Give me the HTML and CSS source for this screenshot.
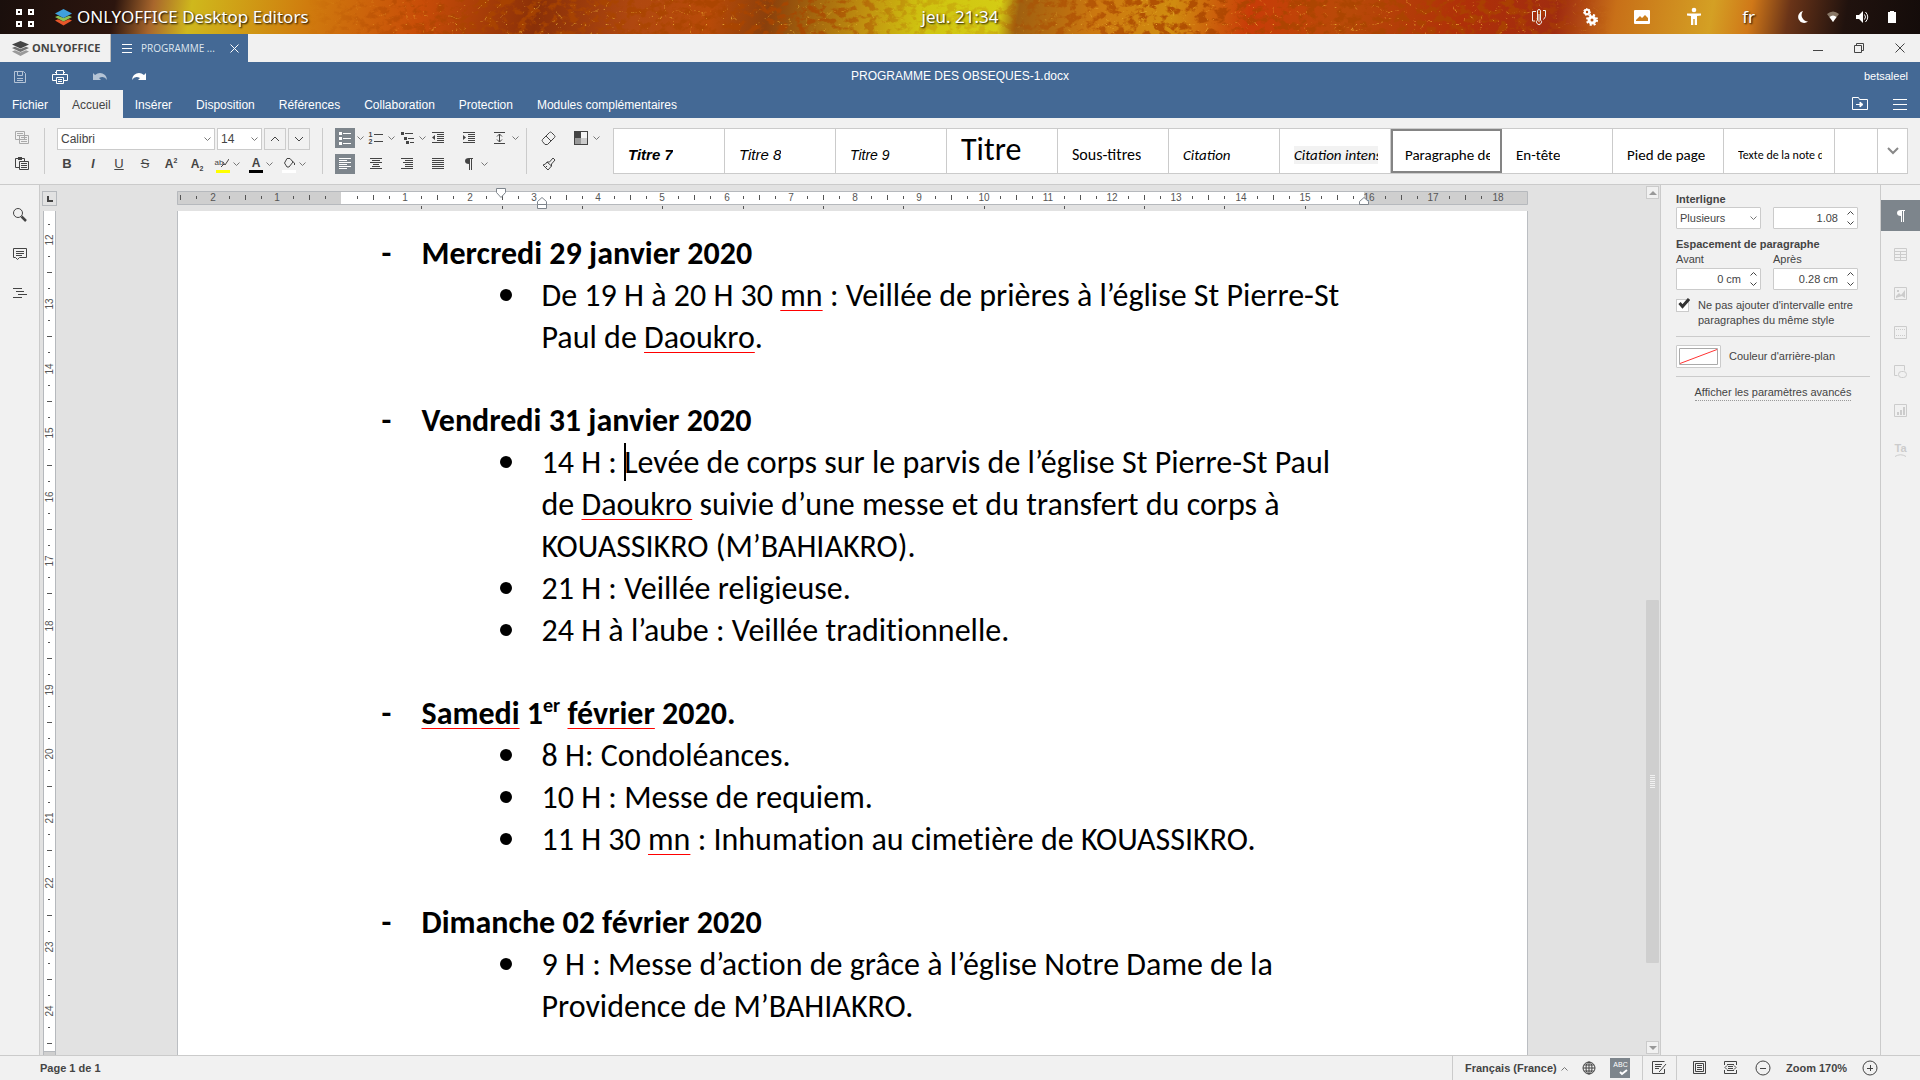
FILE: index.html
```html
<!DOCTYPE html>
<html lang="fr">
<head>
<meta charset="utf-8">
<title>PROGRAMME DES OBSEQUES-1.docx</title>
<link rel="stylesheet" href="styles.css">
</head>
<body>
<svg class="defs" aria-hidden="true">
  <symbol id="chev" viewBox="0 0 7 5"><path d="M.5 .5l3 3 3-3" fill="none" stroke="#777"/></symbol>
  <symbol id="chev-up" viewBox="0 0 7 5"><path d="M.5 4.500l3-3 3 3" fill="none" stroke="#777"/></symbol>
  <symbol id="stack" viewBox="0 0 17 17">
    <path opacity=".5" d="M0 11.500l3-1.300 5.500 2.400 5.500-2.400 3 1.300-8.500 4.500z"/>
    <path opacity=".75" d="M0 8l3-1.300 5.500 2.400L14 6.700 17 8l-8.500 4z"/>
    <path d="M0 4.500L8.500 1 17 4.500 8.500 8.500z"/>
  </symbol>
</svg>

<header class="sysbar">
  <svg class="sky" aria-hidden="true">
    <filter id="lava" x="0" y="0" width="100%" height="100%">
      <feTurbulence type="fractalNoise" baseFrequency=".1 .13" numOctaves="4" seed="8"/>
      <feColorMatrix values="0 0 0 0 .4  0 0 0 0 .06  0 0 0 0 0  6 0 0 0 -2.900"/>
    </filter>
    <filter id="glow" x="0" y="0" width="100%" height="100%">
      <feTurbulence type="turbulence" baseFrequency=".06 .08" numOctaves="4" seed="3"/>
      <feColorMatrix values="0 0 0 0 .95  0 0 0 0 .6  0 0 0 0 .05  -7 0 0 0 .8"/>
    </filter>
    <rect width="100%" height="100%" filter="url(#lava)"/>
    <rect width="100%" height="100%" filter="url(#glow)"/>
  </svg>
  <div class="sys-left">
    <button class="plain" aria-label="Activités"><svg width="20" height="20" fill="none" stroke="#fff" stroke-width="2"><path d="M2 3h4v4H2zM14 3h4v4h-4zM2 15h4v4H2zM14 15h4v4h-4z"/></svg></button>
    <svg class="logo-color" width="17" height="17" viewBox="0 0 17 17"><path fill="#e8562a" d="M0 11.500l3-1.300 5.500 2.400 5.500-2.400 3 1.300-8.500 5z"/><path fill="#8cc152" d="M0 8l3-1.300 5.500 2.400L14 6.700 17 8l-8.500 4.500z"/><path fill="#3fa0dc" d="M0 4.500L8.500 0 17 4.500 8.500 9z"/></svg>
    <span>ONLYOFFICE Desktop Editors</span>
  </div>
  <span class="clock">jeu. 21:34</span>
  <div class="sys-right">
    <svg width="16" height="18" fill="none" stroke="#eee"><path d="M5 3.500H1.500v9.500H4M12 2.500h2.500v6l-2 3M6.500 12V3a1.500 1.500 0 0 1 3 0v9a2.500 2.500 0 1 1-3 0zM8 6v8"/></svg>
    <svg width="16" height="18" fill="none" stroke="#fff"><circle cx="5" cy="4" r="2.200" stroke-width="2"/><circle cx="5" cy="4" r="3.500" stroke-dasharray="1.500 1.500"/><circle cx="10" cy="12" r="3" stroke-width="3"/><circle cx="10" cy="12" r="5" stroke-width="2" stroke-dasharray="2 2"/></svg>
    <svg width="18" height="18"><path fill="#fff" fill-rule="evenodd" d="M2 2h14q1 0 1 1v12q0 1-1 1H2q-1 0-1-1V3q0-1 1-1zm1 11h12v-3l-3-3-3 3-2-2-4 4z"/></svg>
    <svg width="16" height="20" fill="#fff"><circle cx="8" cy="3" r="2.300"/><path d="M1 6.500h14v2l-4 .5v9H8.700v-6H7.300v6H5V9L1 8.500z"/></svg>
    <span class="lang">fr</span>
    <svg width="14" height="14"><path fill="#fff" d="M6 1a6 6 0 1 0 5 10.500A6.500 6.500 0 0 1 6 1z"/></svg>
    <svg width="14" height="14"><path fill="#887766" d="M1 4q6-5 12 0l-6 8z"/><path fill="#fff" d="M3.500 7q3.500-3 7 0L7 12z"/></svg>
    <svg width="14" height="14"><path fill="#fff" d="M1 5h3l4-4v12L4 9H1z"/><path fill="none" stroke="#fff" d="M9.500 4.500q2 2.500 0 5M10.500 2q4.500 5 0 10"/></svg>
    <svg class="battery" width="10" height="14"><path fill="#fff" d="M3 1h4v1h2v11H1V2h2z"/></svg>
  </div>
</header>

<nav class="filetabs">
  <button class="ftab home"><svg width="17" height="17"><use href="#stack"/></svg>ONLYOFFICE</button>
  <button class="ftab doc">
    <svg width="10" height="10" stroke="#fff"><path d="M0 1.500h10M0 5.500h10M0 9.500h10"/></svg>
    <span>PROGRAMME ...</span>
    <svg width="9" height="9" stroke="#fff" fill="none"><path d="M.5 .5l8 8M8.500 .5l-8 8"/></svg>
  </button>
  <div class="winctl">
    <button class="plain" aria-label="Réduire"><svg width="12" height="12" stroke="#444"><path d="M1 8.500h10"/></svg></button>
    <button class="plain" aria-label="Restaurer"><svg width="12" height="12" stroke="#444" fill="none"><path d="M1.500 3.500h7v7h-7zM3.500 3.500v-2h7v7h-2"/></svg></button>
    <button class="plain" aria-label="Fermer"><svg width="12" height="12" stroke="#444" fill="none"><path d="M1.500 1.500l9 9M10.500 1.500l-9 9"/></svg></button>
  </div>
</nav>

<div class="titlebar">
  <div class="quick">
    <button class="plain" aria-label="Enregistrer"><svg width="14" height="14" fill="none" stroke="#b5c4d6"><path d="M1.500 1.500h9l2 2v9h-11zM4.500 1.500v4h5v-4M4 8.500h6M4 10.500h6"/></svg></button>
    <button class="plain" aria-label="Imprimer"><svg width="16" height="14" fill="none" stroke="#fff"><path d="M4.500 4V.5h7V4M4.500 10.500h-4v-6h15v6h-4M4.500 7.500h7v6h-7zM6 9.500h4M6 11.500h4M3 2.500h2M12 2.500h1"/></svg></button>
    <button class="plain" aria-label="Annuler"><svg width="14" height="10"><path fill="#b5c4d6" d="M0 1l2 2q5-4 10 0 2 2 2 5-3-5-8-2l2 2H0z"/></svg></button>
    <button class="plain" aria-label="Rétablir"><svg width="14" height="10"><path fill="#fff" d="M14 1l-2 2Q7-1 2 3 0 5 0 8q3-5 8-2L6 8h8z"/></svg></button>
  </div>
  <span class="doc-title">PROGRAMME DES OBSEQUES-1.docx</span>
  <span class="user">betsaleel</span>
</div>

<nav class="menu">
  <button>Fichier</button><button class="active">Accueil</button><button>Insérer</button><button>Disposition</button><button>Références</button><button>Collaboration</button><button>Protection</button><button>Modules complémentaires</button>
  <div class="menu-right">
    <button class="plain" aria-label="Ouvrir l'emplacement"><svg width="17" height="14" fill="none" stroke="#fff"><path d="M.5 12.500V.5h6l1 2h8v10z"/><path d="M4 7.500h6M8 5l3 2.500L8 10z" fill="#fff"/></svg></button>
    <button class="plain" aria-label="Affichage"><svg width="14" height="11" stroke="#fff"><path d="M0 .5h14M0 5.500h14M0 10.500h14"/></svg></button>
  </div>
</nav>

<div class="toolbar">
  <div class="tools clip">
    <div class="row"><button class="ib" aria-label="Copier"><svg width="14" height="14" fill="#f1f1f1" stroke="#aaa"><path d="M.5 .5h9v8h-9zM2 2.500h6M2 4.500h3M4.500 4.500h9v8h-9zM6 6.500h6M6 8.500h6M6 10.500h6"/></svg></button></div>
    <div class="row"><button class="ib" aria-label="Coller"><svg width="14" height="14" fill="#f1f1f1" stroke="#444"><path d="M.5 1.500h9v9h-9z"/><path d="M3 1.500h4" stroke-width="3"/><path d="M4.500 4.500h9v8h-9zM6 6.500h6M6 8.500h6M6 10.500h6"/></svg></button></div>
  </div>
  <div class="tools font">
    <div class="row fontrow">
      <span class="combo"><input class="w-font" aria-label="Police" value="Calibri"><svg width="7" height="5"><use href="#chev"/></svg></span>
      <span class="combo"><input class="w-size" aria-label="Taille" value="14"><svg width="7" height="5"><use href="#chev"/></svg></span>
      <button class="boxed" aria-label="Augmenter la taille"><svg width="10" height="6" fill="none" stroke="#444"><path d="M1 5l4-4 4 4"/></svg></button>
      <button class="boxed" aria-label="Réduire la taille"><svg width="10" height="6" fill="none" stroke="#444"><path d="M1 1l4 4 4-4"/></svg></button>
    </div>
    <div class="row spaced">
      <button class="ib"><b>B</b></button>
      <button class="ib"><i>I</i></button>
      <button class="ib"><u>U</u></button>
      <button class="ib"><s>S</s></button>
      <button class="ib letter">A<sup>2</sup></button>
      <button class="ib letter">A<sub>2</sub></button>
      <span class="split"><button class="ib ink yellow"><small>ab</small><svg width="8" height="11" fill="none" stroke="#444"><path d="M0 10l3-3M2 5l2 3 4-6"/></svg></button><svg width="7" height="5"><use href="#chev"/></svg></span>
      <span class="split"><button class="ib ink black">A</button><svg width="7" height="5"><use href="#chev"/></svg></span>
      <span class="split"><button class="ib ink white" aria-label="Ombrage"><svg width="13" height="11" fill="none" stroke="#444"><path d="M4 1.500h3l3 3.500-4 5H4L1.500 6zM9 4l2.500 2v2"/></svg></button><svg width="7" height="5"><use href="#chev"/></svg></span>
    </div>
  </div>
  <div class="tools para">
    <div class="row">
      <span class="split"><button class="ib on" aria-label="Puces"><svg width="14" height="14" stroke="#fff"><path d="M5 2.500h8M5 7.500h8M5 12.500h8"/><path d="M1 2.500h3M1 7.500h3M1 12.500h3" stroke-width="3"/></svg></button><svg width="7" height="5"><use href="#chev"/></svg></span>
      <span class="split"><button class="ib nums" aria-label="Numérotation"><span>1<br>2</span><svg width="9" height="12" stroke="#444"><path d="M0 2.500h9M0 9.500h9"/></svg></button><svg width="7" height="5"><use href="#chev"/></svg></span>
      <span class="split"><button class="ib" aria-label="Liste multiniveau"><svg width="14" height="14" stroke="#444"><path d="M5 2.500h8M8 7.500h6M10 11.500h4"/><path d="M1 2.500h3M4 7.500h3M6 11.500h3" stroke-width="3"/></svg></button><svg width="7" height="5"><use href="#chev"/></svg></span>
      <span class="split"><button class="ib" aria-label="Réduire le retrait"><svg width="14" height="14" stroke="#444"><path d="M1 1.500h12M6 3.500h7M6 5.500h7M6 7.500h7M6 9.500h7M1 11.500h12"/><path d="M1 6.500L4 4v5z" fill="#444" stroke="none"/></svg></button></span>
      <span class="split"><button class="ib" aria-label="Augmenter le retrait"><svg width="14" height="14" stroke="#444"><path d="M1 1.500h12M6 3.500h7M6 5.500h7M6 7.500h7M6 9.500h7M1 11.500h12"/><path d="M4 6.500L1 4v5z" fill="#444" stroke="none"/></svg></button></span>
      <span class="split"><button class="ib" aria-label="Interligne"><svg width="14" height="14" stroke="#444" fill="none"><path d="M1 1.500h11M1 12.500h11M6.500 3v8M4 5.500L6.500 3 9 5.500M4 8.500L6.500 11 9 8.500"/></svg></button><svg width="7" height="5"><use href="#chev"/></svg></span>
    </div>
    <div class="row">
      <span class="split"><button class="ib on" aria-label="Aligner à gauche"><svg width="14" height="14" stroke="#fff"><path d="M1 1.500h12M1 3.500h8M1 5.500h12M1 7.500h8M1 9.500h12M1 11.500h8"/></svg></button></span>
      <span class="split"><button class="ib" aria-label="Centrer"><svg width="14" height="14" stroke="#444"><path d="M1 1.500h12M3 3.500h8M1 5.500h12M4 7.500h6M3 9.500h8M1 11.500h12"/></svg></button></span>
      <span class="split"><button class="ib" aria-label="Aligner à droite"><svg width="14" height="14" stroke="#444"><path d="M1 1.500h12M5 3.500h8M3 5.500h10M5 7.500h8M5 9.500h8M1 11.500h12"/></svg></button></span>
      <span class="split"><button class="ib" aria-label="Justifier"><svg width="14" height="14" stroke="#444"><path d="M1 1.500h12M1 3.500h12M1 5.500h12M1 7.500h12M1 9.500h12M1 11.500h12"/></svg></button></span>
      <span class="split"><button class="ib" aria-label="Caractères non imprimables"><svg width="10" height="12"><path fill="#444" d="M9 0v1H8v11H7V1H6v11H5V6Q1 6 1 3t4-3z"/></svg></button><svg width="7" height="5"><use href="#chev"/></svg></span>
    </div>
  </div>
  <div class="tools misc">
    <div class="row">
      <span class="split"><button class="ib" aria-label="Effacer le style"><svg width="16" height="14" fill="none" stroke="#444"><path d="M1.500 8.500l7-7q1-1 2 0l3 3q1 1 0 2l-7 7H4L1.500 10.500q-.8-1 0-2zM5 5l5 5"/></svg></button></span>
      <span class="split"><button class="ib" aria-label="Jeu de couleurs"><svg width="14" height="14"><path fill="#444" d="M0 0h14v14H0z"/><path fill="#f4f4f4" d="M7 1h6v6H7z"/><path fill="#999" d="M1 7h6v6H1z"/><path fill="#ccc" d="M7 7h6v6H7z"/></svg></button><svg width="7" height="5"><use href="#chev"/></svg></span>
    </div>
    <div class="row"><span class="split"><button class="ib" aria-label="Copier le style"><svg width="14" height="14" fill="none" stroke="#444"><path d="M7.500 5L11 1l2 2-3.500 4v2L6 13 1 8q3-.5 4-3zM5 5l4.500 4M4 9l1 1"/></svg></button></span></div>
  </div>
  <div class="gallery">
    <button class="st t7"><span>Titre 7</span></button>
    <button class="st t8"><span>Titre 8</span></button>
    <button class="st t9"><span>Titre 9</span></button>
    <button class="st big"><span>Titre</span></button>
    <button class="st sub"><span>Sous-titres</span></button>
    <button class="st it"><span>Citation</span></button>
    <button class="st it shade"><span>Citation intense</span></button>
    <button class="st sel"><span>Paragraphe de liste</span></button>
    <button class="st"><span>En-tête</span></button>
    <button class="st"><span>Pied de page</span></button>
    <button class="st note"><span>Texte de la note de bas</span></button>
    <span class="rest"></span>
    <button class="more" aria-label="Plus de styles"><svg width="12" height="8" fill="none" stroke="#888" stroke-width="2"><path d="M1 1l5 5 5-5"/></svg></button>
  </div>
</div>

<main class="body">
  <aside class="left">
    <button class="plain" aria-label="Rechercher"><svg width="16" height="16" fill="none" stroke="#444"><circle cx="6" cy="6" r="4.500"/><path d="M9.500 9.500l4.500 4.500" stroke-width="2.500"/></svg></button>
    <button class="plain" aria-label="Commentaires"><svg width="16" height="16" fill="none" stroke="#444"><path d="M1.500 2.500h13v9h-7l-2 2-2-2h-2zM4 5.500h8M4 7.500h8M4 9.500h6"/></svg></button>
    <button class="plain" aria-label="Navigation"><svg width="16" height="16" stroke="#444"><path d="M1 3.500h9M4 6.500h8M6 9.500h9M1 12.500h9"/></svg></button>
  </aside>
  <section class="editor">
    <button class="tabkind" aria-label="Taquet"><svg width="6" height="6"><path d="M1 0v5h5" fill="none" stroke="#444" stroke-width="2"/></svg></button>
    <svg class="hruler" id="hruler"></svg>
    <svg class="vruler" id="vruler"></svg>
    <article class="page">
      <h2>Mercredi 29 janvier 2020</h2>
      <ul>
        <li>De 19 H à 20 H 30 <em>mn</em>&nbsp;: Veillée de prières à l’église St Pierre-St<br>Paul de <em>Daoukro</em>.</li>
      </ul>
      <h2>Vendredi 31 janvier 2020</h2>
      <ul>
        <li>14 H&nbsp;: <span class="cursor"></span>Levée de corps sur le parvis de l’église St Pierre-St Paul<br>de <em>Daoukro</em> suivie d’une messe et du transfert du corps à<br>KOUASSIKRO (M’BAHIAKRO).</li>
        <li>21 H&nbsp;: Veillée religieuse.</li>
        <li>24 H à l’aube&nbsp;: Veillée traditionnelle.</li>
      </ul>
      <h2><em>Samedi</em> 1<sup>er</sup> <em>février</em> 2020.</h2>
      <ul>
        <li>8 H: Condoléances.</li>
        <li>10 H&nbsp;: Messe de requiem.</li>
        <li>11 H 30 <em>mn</em>&nbsp;: Inhumation au cimetière de KOUASSIKRO.</li>
      </ul>
      <h2>Dimanche 02 février 2020</h2>
      <ul>
        <li>9 H&nbsp;: Messe d’action de grâce à l’église Notre Dame de la<br>Providence de M’BAHIAKRO.</li>
      </ul>
    </article>
    <div class="scroll">
      <button class="arrow" aria-label="Haut"><svg width="8" height="4"><path fill="#999" d="M4 0l4 4H0z"/></svg></button>
      <div class="track"><div class="thumb"><i></i></div></div>
      <button class="arrow" aria-label="Bas"><svg width="8" height="4"><path fill="#999" d="M4 4l4-4H0z"/></svg></button>
    </div>
  </section>
  <aside class="props">
    <label class="title" for="ls">Interligne</label>
    <div class="pair">
      <span class="field"><select id="ls"><option>Plusieurs</option></select><svg width="7" height="5"><use href="#chev"/></svg></span>
      <span class="field spin"><input aria-label="Valeur d'interligne" value="1.08"><svg width="7" height="14" fill="none" stroke="#444"><path d="M.5 3.500l3-3 3 3M.5 10.500l3 3 3-3"/></svg></span>
    </div>
    <h3 class="title second">Espacement de paragraphe</h3>
    <div class="pair">
      <label for="bef">Avant</label><label for="aft">Après</label>
      <span class="field spin"><input id="bef" value="0 cm"><svg width="7" height="14" fill="none" stroke="#444"><path d="M.5 3.500l3-3 3 3M.5 10.500l3 3 3-3"/></svg></span>
      <span class="field spin"><input id="aft" value="0.28 cm"><svg width="7" height="14" fill="none" stroke="#444"><path d="M.5 3.500l3-3 3 3M.5 10.500l3 3 3-3"/></svg></span>
    </div>
    <label class="check"><input type="checkbox" checked><svg width="13" height="13" fill="none" stroke="#333" stroke-width="3"><path d="M2.500 5l3 3.500L12 1"/></svg><span>Ne pas ajouter d'intervalle entre paragraphes du même style</span></label>
    <div class="color"><button aria-label="Couleur d'arrière-plan"><svg width="39" height="17" fill="#fff"><path d="M.5 .5h38v16H.5z" stroke="#aaa"/><path d="M1 15.500L38 1.500" stroke="#f33"/></svg></button><span>Couleur d'arrière-plan</span></div>
    <div class="adv"><a href="#">Afficher les paramètres avancés</a></div>
  </aside>
  <aside class="strip">
    <button class="on" aria-label="Paragraphe"><svg width="10" height="12"><path fill="#fff" d="M9 0v1H8v11H7V1H6v11H5V6Q1 6 1 3t4-3z"/></svg></button>
    <button aria-label="Tableau"><svg width="13" height="13" fill="none" stroke="#ccc"><path d="M.5 .5h12v12H.5zM0 3.500h13M0 6.500h13M0 9.500h13M6.500 3v10"/></svg></button>
    <button aria-label="Image"><svg width="13" height="13" fill="none" stroke="#ccc"><path d="M.5 .5h12v12H.5z"/><path fill="#ccc" stroke="none" d="M2 11V9l3-3 2 2 4-5v8l-3-2zM3 3h2v2H3z"/></svg></button>
    <button aria-label="En-tête"><svg width="13" height="13" fill="none" stroke="#ccc"><path d="M.5 .5h12v12H.5z"/><path d="M2 3.500h9M2 9.500h9" stroke-dasharray="1 1"/></svg></button>
    <button aria-label="Forme"><svg width="13" height="13" fill="none" stroke="#ccc"><path d="M3.500 10.500h-3V.5h10v5"/><rect x="4.500" y="6.500" width="8" height="6" rx="3"/></svg></button>
    <button aria-label="Graphique"><svg width="13" height="13" fill="none" stroke="#ccc"><path d="M.5 .5h12v12H.5z"/><path d="M4 8v3M7 6v5M10 3v8" stroke-width="2"/></svg></button>
    <button class="ta" aria-label="Texte Art">Ta<svg width="11" height="3" fill="none" stroke="#ccc"><path d="M0 2.500q5.500-3.500 11 0"/></svg></button>
  </aside>
</main>

<footer class="status">
  <span class="pages">Page 1 de 1</span>
  <div class="cell lang">
    <button class="plain">Français (France)<svg width="7" height="5"><use href="#chev-up"/></svg></button>
    <button class="plain" aria-label="Langue du document"><svg width="14" height="14" fill="none" stroke="#444"><circle cx="7" cy="7" r="6"/><ellipse cx="7" cy="7" rx="3" ry="6"/><path d="M7 1v12M1 7h12M2 4h10M2 10h10"/></svg></button>
    <button class="abc" aria-label="Vérification de l'orthographe"><span>ABC</span><svg width="9" height="7" fill="none" stroke="#fff" stroke-width="2"><path d="M1 3l2 2 5-4"/></svg></button>
  </div>
  <div class="cell track-ch"><button class="plain" aria-label="Suivi des modifications"><svg width="15" height="14" fill="none" stroke="#444"><path d="M12.500 8v4.500H.5V.5h12M3 3.500h7M3 5.500h6M3 7.500h4M14 3l-6 7-1 1"/></svg></button></div>
  <div class="cell zoom">
    <button class="plain" aria-label="Ajuster à la page"><svg width="14" height="14" fill="none" stroke="#444"><path d="M.5 .5h12v12H.5zM2.500 2.500h8v8h-8zM4 4.500h5M4 6.500h5M4 8.500h5"/></svg></button>
    <button class="plain" aria-label="Ajuster à la largeur"><svg width="14" height="14" fill="none" stroke="#444"><path d="M.5 4V.5h12V4M.5 9v3.500h12V9M3 3.500h7M3 9.500h7M4 5.500h5M4 7.500h5M3 4.500l-2 2 2 2M10 4.500l2 2-2 2"/></svg></button>
    <button class="plain" aria-label="Zoom arrière"><svg width="16" height="16" fill="none" stroke="#444"><circle cx="8" cy="8" r="7"/><path d="M5 8.500h6"/></svg></button>
    <span>Zoom 170%</span>
    <button class="plain" aria-label="Zoom avant"><svg width="16" height="16" fill="none" stroke="#444"><circle cx="8" cy="8" r="7"/><path d="M5 8.500h6M8.500 5v6"/></svg></button>
  </div>
</footer>
<script src="ruler.js"></script>
</body>
</html>
```
FILE: ruler.js
```js
// Rulers: one centimetre at 170% zoom, with quarter ticks between the numbers.
const CM = 64.25;

function tick(x, y, len, vertical) {
  const px = Math.round(x);
  return vertical
    ? `<rect x="${y}" y="${px}" width="${len}" height="1"/>`
    : `<rect x="${px}" y="${y}" width="1" height="${len}"/>`;
}

function horizontal() {
  const zero = 164, end = 1187, width = 1350;
  let out = `<rect class="off" x="0" y="6" width="${width}" height="14"/>
    <rect class="on" x="${zero}" y="6" width="${end - zero}" height="14"/>
    <path class="edge" d="M.5 6.500h${width}v13H.5z"/><g class="ticks">`;
  for (let q = -10; q <= 72; q++) {
    const x = zero + q * CM / 4;
    if (q === 0) continue;
    if (q % 4 === 0) out += `<text x="${Math.round(x)}" y="16">${Math.abs(q / 4)}</text>`;
    else if (q % 2 === 0) out += tick(x, 10, 5, false);
    else out += tick(x, 11, 3, false);
  }
  for (let t = 1; t <= 12; t++) out += tick(zero + t * CM * 1.25, 21, 3, false);
  out += `</g><path class="mark" d="M319.500 3.500h9v4l-4.500 5-4.500-5z"/>
    <path class="mark" d="M360.500 19.500v-3l4.500-4 4.500 4v7h-9zM360.500 19.500h9"/>
    <path class="mark" d="M1182.500 19.500v-3l4.500-4 4.500 4v3z"/>`;
  document.getElementById('hruler').innerHTML = out;
}

function vertical() {
  const first = 29;
  let out = `<rect class="on" x="0" y="0" width="14" height="840"/>
    <rect class="off" x="0" y="840" width="14" height="400"/>
    <path class="edge" d="M.5 0v1240M12.500 0v1240M0 840.500h13"/><g class="ticks">`;
  for (let q = -1; q <= 50; q++) {
    const y = first + q * CM / 4;
    if (q % 4 === 0) out += `<text transform="translate(10 ${Math.round(y)}) rotate(-90)">${12 + q / 4}</text>`;
    else if (q % 2 === 0) out += tick(y, 4, 5, true);
    else out += tick(y, 5, 2, true);
  }
  document.getElementById('vruler').innerHTML = out + '</g>';
}

horizontal();
vertical();
```
FILE: styles.css
```css
* { box-sizing: border-box; }
html, body { height: 100%; }
body {
  margin: 0;
  display: flex;
  flex-direction: column;
  overflow: hidden;
  background: #f1f1f1;
  color: #444;
  font: 11px/15px "Liberation Sans", Arial, sans-serif;
}
button, input, select { font: inherit; color: inherit; margin: 0; padding: 0; border: 0; background: none; border-radius: 0; }
svg { display: block; flex: none; }
.defs { position: absolute; width: 0; height: 0; }
.plain { display: flex; align-items: center; justify-content: center; gap: 4px; }

/* system bar */
.sysbar {
  position: relative;
  height: 34px;
  flex: none;
  display: grid;
  grid-template-columns: 1fr auto 1fr;
  align-items: center;
  color: #fff;
  font: 400 17px/24px "Noto Sans", sans-serif;
  text-shadow: 1px 1px 2px #000;
  background: linear-gradient(100deg, #1a0f0c 0, #2c150e 6%, #a8662c 8%, #cfb81c 10%, #d07c0e 16%, #c84c08 22%, #8a3008 28%, #b04810 33%, #b84a08 37%, #8a400c 40%, #c09010 45%, #cfc410 48%, #d4cc14 52%, #a06010 53%, #cc7810 57%, #d08c10 61%, #c83c08 65%, #b84a08 70%, #b03008 76%, #a02c10 81%, #c87018 84%, #d4a024 89%, #d07818 91%, #6a3418 93%, #20120e 96%, #140c0a 100%);
}
.sky { position: absolute; top: 0; left: 16%; width: 68%; height: 34px; opacity: .8; mask-image: linear-gradient(90deg, transparent, #000 12%, #000 38%, #0004 46%, #0003 52%, #000a 58%, #000 64%, #000 92%, transparent); }
.sys-left, .sys-right, .clock { position: relative; }
.sys-left { display: flex; align-items: center; padding-left: 15px; }
.logo-color { margin: 0 5px 0 20px; }
.sys-right { display: flex; align-items: center; justify-content: flex-end; padding-right: 23px; gap: 15px; }
.sys-right svg:nth-child(-n+4) { margin-right: 20px; }
.sys-right .lang { margin: 0 27px 0 5px; }
.sys-right .battery { margin-left: 3px; }

/* file tabs */
.filetabs { height: 28px; flex: none; display: flex; font: 11px/16px "Open Sans", sans-serif; }
.ftab { display: flex; align-items: center; }
.home { width: 111px; padding-left: 12px; gap: 3px; font-weight: 700; color: #444; fill: #444; border-right: 1px solid #bbb; }
.doc { width: 137px; padding: 0 9px 0 11px; background: #446995; color: #dfe6ee; font-size: 10px; }
.doc span { flex: 1; padding-left: 9px; text-align: left; }
.winctl { margin-left: auto; display: flex; align-items: center; gap: 29px; padding-right: 14px; }

/* title and menu */
.titlebar { height: 28px; flex: none; display: grid; grid-template-columns: 1fr auto 1fr; align-items: center; background: #446995; color: #fff; padding: 1px 12px 0; }
.quick { display: flex; gap: 25px; padding-left: 1px; }
.doc-title { font-size: 12px; }
.user { text-align: right; }
.menu { height: 28px; flex: none; display: flex; background: #446995; color: #fff; font-size: 12px; }
.menu > button { padding: 2px 12px 0; }
.menu > .active { background: #f1f1f1; color: #444; }
.menu-right { margin-left: auto; display: flex; gap: 24px; padding-right: 13px; }

/* toolbar */
.toolbar { height: 67px; flex: none; display: flex; padding: 10px 12px; border-bottom: 1px solid #cbcbcb; }
.tools { height: 46px; display: flex; flex-direction: column; justify-content: space-between; border-right: 1px solid #cbcbcb; }
.row { display: flex; height: 20px; }
.fontrow { height: 22px; gap: 2px; }
.spaced { gap: 6px; }
.clip { width: 33px; }
.font { padding-left: 12px; width: 278px; }
.para { padding-left: 12px; width: 204px; }
.misc { padding-left: 12px; width: 86px; border: 0; }
.ib { width: 20px; height: 20px; display: flex; align-items: center; justify-content: center; flex: none; font-weight: 700; font-size: 12px; line-height: 14px; }
.ib b { font-size: 13px; }
.ib u, .ib s { font-weight: 400; font-size: 13px; }
.ib.on { background: #7d858c; }
.letter sup, .letter sub { font-size: 7px; line-height: 7px; }
.letter sup { align-self: flex-start; padding-top: 3px; }
.letter sub { align-self: flex-end; padding-bottom: 2px; }
.nums { gap: 2px; font-size: 7px; line-height: 7px; }
.split { display: flex; align-items: center; gap: 2px; width: 27px; height: 20px; flex: none; }
.para .split { width: 31px; }
.misc .split { width: 32px; }
.ink { border-bottom: 3px solid; height: 17px; margin: 0 3px; width: 14px; }
.split .ink { margin-right: 1px; }
.ink small { font-size: 8px; font-weight: 400; margin: 0 -2px; }
.yellow { border-color: #ff0; }
.black { border-color: #000; }
.white { border-color: #fff; }
.combo { position: relative; display: flex; align-items: center; }
.combo input { height: 22px; border: 1px solid #cbcbcb; background: #fff; padding-left: 3px; font-size: 12px; }
.combo svg { position: absolute; right: 4px; }
.w-font { width: 158px; }
.w-size { width: 45px; }
.boxed { width: 22px; height: 22px; border: 1px solid #cbcbcb; display: grid; place-items: center; }
.gallery { flex: 1; height: 46px; display: flex; background: #fff; border: 1px solid #cbcbcb; }
.st { width: 111px; flex: none; border-right: 1px solid #cbcbcb; padding: 17px 12px 0 14px; text-align: left; display: flex; color: #000; font: 15px/18px Carlito, Lato, sans-serif; }
.st span { overflow: hidden; white-space: nowrap; height: 18px; }
.st.t7, .st.t8, .st.t9 { font-family: "Liberation Sans", Arial, sans-serif; font-size: 15px; font-style: italic; }
.st.t7 { font-weight: 700; }
.st.t9 { font-size: 14px; }
.st.big { font-size: 32px; padding-top: 1px; }
.st.big span { height: 40px; line-height: 40px; }
.st.sub { font-size: 16px; }
.st.it { font-style: italic; }
.st.shade span { background: #f2f2f2; }
.st.note { font-size: 12px; }
.st.sel { border: 2px solid #848484; padding: 15px 10px 0 12px; }
.rest { flex: 1; }
.more { width: 30px; border-left: 1px solid #cbcbcb; display: grid; place-items: center; }

/* body */
.body { flex: 1; min-height: 0; display: grid; grid-template-columns: 40px 1fr 220px 40px; }
.left { border-right: 1px solid #cbcbcb; display: flex; flex-direction: column; align-items: center; gap: 23px; padding-top: 22px; }
.editor { background: #e2e2e2; min-width: 0; min-height: 0; display: grid; grid-template-columns: 18px 1fr 14px; grid-template-rows: 26px 1fr; }
.tabkind { grid-area: 1 / 1; margin: 6px 0 0 2px; width: 15px; height: 15px; border: 1px solid #b6b9bd; display: grid; place-items: center; align-content: end; padding-bottom: 3px; background: #e2e2e2; }
.hruler { grid-area: 1 / 2; justify-self: center; width: 1351px; height: 26px; }
.vruler { grid-area: 2 / 1; margin-left: 3px; width: 13px; height: 100%; }
.off { fill: #cfcfcf; }
.hruler .on, .vruler .on { fill: #fff; }
.edge { fill: none; stroke: #b6b9bd; }
.mark { fill: #fff; stroke: #7e858c; }
.ticks { fill: #555; font-size: 10px; text-anchor: middle; }
.page { grid-area: 2 / 2; justify-self: center; width: 1351px; min-height: 0; overflow: hidden; background: #fff; border: solid #bbbec2; border-width: 0 1px; padding: 22px 180px 0 204px; color: #000; font: 32px/42px Carlito, Lato, sans-serif; font-variant-ligatures: none; }
.page h2 { margin: 41px 0 0; font: inherit; font-weight: 700; padding-left: 40px; position: relative; }
.page h2:first-child { margin-top: 0; }
.page h2::before { content: "-"; position: absolute; left: 0; }
.page ul { margin: 0; padding: 0 0 0 160px; list-style: none; }
.page li { position: relative; white-space: nowrap; }
.page li::before { content: ""; position: absolute; left: -42px; top: 14px; width: 12px; height: 12px; border-radius: 6px; background: #000; }
.page em { font-style: normal; text-decoration: underline 1px #f00; text-underline-offset: 4px; text-decoration-skip-ink: none; }
.page sup { font-size: 20px; line-height: 1px; }
.cursor { position: absolute; width: 2px; height: 38px; margin-top: 1px; background: #000; }
.scroll { grid-area: 1 / 3 / 3 / 4; display: flex; flex-direction: column; width: 13px; padding: 1px 0; min-height: 0; }
.arrow { height: 13px; border: 1px solid #cbcbcb; background: #f1f1f1; display: grid; place-items: center; }
.track { flex: 1; display: flex; flex-direction: column; padding-top: 401px; }
.thumb { height: 363px; background: #cfcfcf; border-radius: 1px; display: grid; place-items: center; }
.thumb i { width: 5px; height: 13px; background: repeating-linear-gradient(#f1f1f1 0 1px, #cfcfcf 1px 2px); }

/* paragraph settings */
.props { border-left: 1px solid #cbcbcb; padding: 7px 10px 0 15px; display: flex; flex-direction: column; }
.title { margin: 0; font-size: 11px; font-weight: 700; }
.second { margin-top: 7px; line-height: 16px; }
.pair { display: grid; grid-template-columns: 85px 85px; column-gap: 12px; }
.pair label { padding-bottom: 1px; }
.field { position: relative; display: flex; align-items: center; }
.field select, .field input { width: 100%; height: 22px; border: 1px solid #cbcbcb; background: #fff; appearance: none; padding: 0 3px; border-radius: 1px; }
.field svg { position: absolute; right: 4px; }
.field.spin input { text-align: right; padding-right: 19px; }
.check { display: flex; position: relative; gap: 9px; margin-top: 9px; padding-bottom: 8px; border-bottom: 1px solid #cbcbcb; }
.check input { appearance: none; flex: none; width: 13px; height: 13px; border: 1px solid #cbcbcb; background: #fff; }
.check svg { position: absolute; left: 1px; top: -1px; }
.check span { max-width: 160px; margin-top: -1px; }
.color { display: flex; align-items: center; gap: 8px; padding: 8px 0; border-bottom: 1px solid #cbcbcb; }
.color button { width: 45px; height: 23px; border: 1px solid #cbcbcb; border-radius: 1px; background: #fff; display: grid; place-items: center; }
.adv { text-align: center; padding-top: 7px; }
.adv a { color: inherit; text-decoration: none; display: inline-block; line-height: 16px; border-bottom: 1px dotted #999; }
.strip { border-left: 1px solid #cbcbcb; display: flex; flex-direction: column; gap: 8px; padding-top: 15px; }
.strip button { height: 31px; display: grid; place-items: center; align-content: center; }
.strip .on { background: #7d858c; }
.strip .ta { color: #ccc; font-weight: 700; line-height: 11px; }

/* status bar */
.status { height: 25px; flex: none; border-top: 1px solid #cbcbcb; display: flex; align-items: center; font-weight: 700; }
.pages { margin-right: auto; padding-left: 40px; }
.status .plain { font-weight: 700; }
.cell { height: 24px; border-left: 1px solid #cbcbcb; display: flex; align-items: center; }
.status .lang { width: 190px; padding-left: 12px; gap: 14px; }
.abc { width: 20px; height: 20px; background: #7d858c; color: #fff; font-size: 7px; line-height: 8px; display: grid; justify-items: end; align-content: center; padding-right: 2px; font-weight: 400; }
.track-ch { width: 34px; padding-left: 9px; }
.zoom { width: 244px; padding-left: 16px; gap: 17px; }
.zoom span { margin: 0 -2px; }
```
